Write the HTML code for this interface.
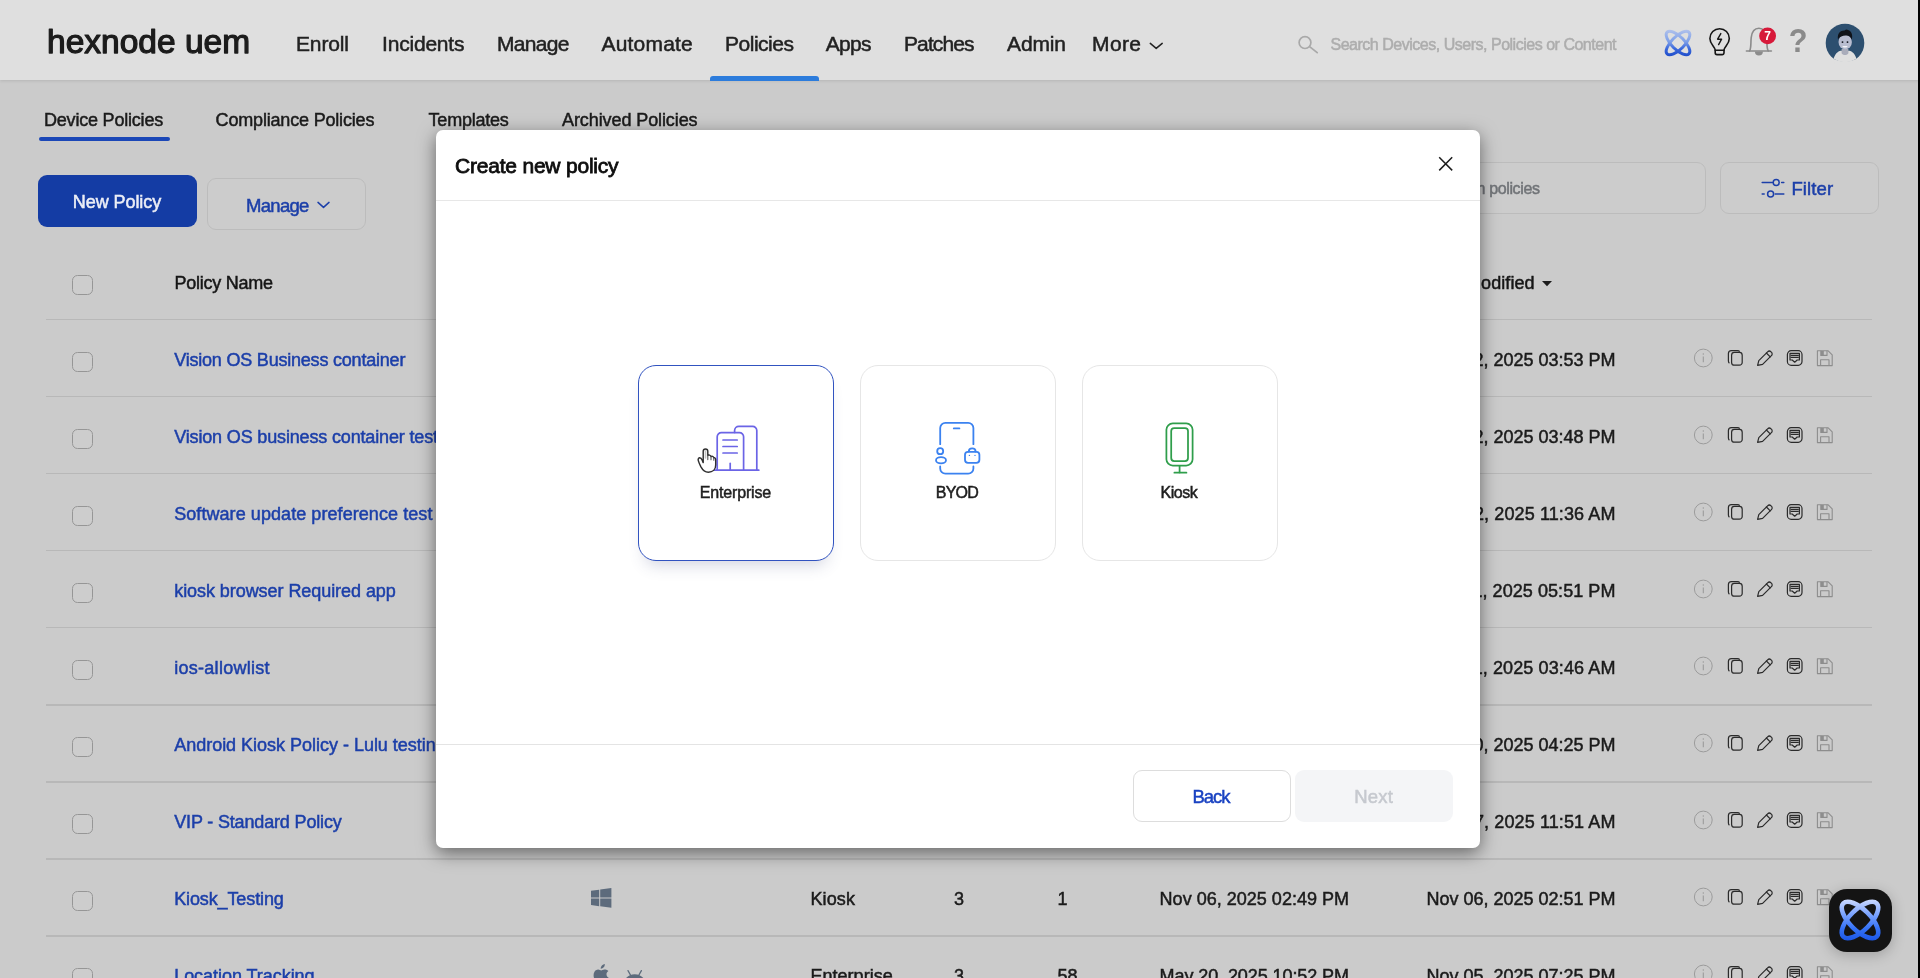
<!DOCTYPE html>
<html lang="en"><head><meta charset="utf-8"><title>Hexnode UEM - Policies</title>
<style>

*{box-sizing:border-box;margin:0;padding:0}
html,body{width:1920px;height:978px;overflow:hidden}
body{background:#cbcbcb;font-family:"Liberation Sans",sans-serif;position:relative;color:#1b1b1b}
#app{position:absolute;left:0;top:0;width:1920px;height:978px;overflow:hidden;will-change:transform}
.t{position:absolute;white-space:nowrap;line-height:1;display:block;-webkit-text-stroke:0.5px currentColor}
.abs{position:absolute}
svg{position:absolute;overflow:visible}
#hdr{position:absolute;left:0;top:0;width:1920px;height:80px;background:#dfdfdf;box-shadow:0 1px 3px rgba(0,0,0,.11)}
.line{position:absolute;left:46px;width:1826.4px;height:1.4px;background:#b8b8b8}
.cb{position:absolute;left:72px;width:21px;height:20px;border:1px solid #969696;border-radius:5.5px;background:#cdcdcd}
#modal{position:absolute;left:436px;top:130px;width:1044px;height:718px;background:#fff;border-radius:7px;box-shadow:0 5px 18px rgba(0,0,0,.5)}
.card{position:absolute;top:365px;width:196px;height:196px;border-radius:18px;background:#fff;border:1px solid #e6e6e6}
.btn{position:absolute;border-radius:9px}

</style></head>
<body>
<div id="app">
<header>
<div id="hdr">
<svg style="left:40px;top:14px" width="220" height="52" viewBox="40 14 220 52"><text x="47.0" y="52.6" font-family="Liberation Sans, sans-serif" font-size="33" textLength="203.2" lengthAdjust="spacingAndGlyphs" fill="#1c1c1c" stroke="#1c1c1c" stroke-width="1.25" stroke-linejoin="round" stroke-linecap="round">hexnode uem</text></svg>
<span class="t" style="left:296.00px;top:33px;font-size:21px;color:#222222;letter-spacing:-0.138px;">Enroll</span>
<span class="t" style="left:382.00px;top:33px;font-size:21px;color:#222222;letter-spacing:-0.194px;">Incidents</span>
<span class="t" style="left:497.00px;top:33px;font-size:21px;color:#222222;letter-spacing:-0.678px;">Manage</span>
<span class="t" style="left:601.50px;top:33px;font-size:21px;color:#222222;letter-spacing:0.188px;">Automate</span>
<span class="t" style="left:725.00px;top:33px;font-size:21px;color:#222222;letter-spacing:-0.480px;">Policies</span>
<span class="t" style="left:825.70px;top:33px;font-size:21px;color:#222222;letter-spacing:-0.689px;">Apps</span>
<span class="t" style="left:904.00px;top:33px;font-size:21px;color:#222222;letter-spacing:-0.897px;">Patches</span>
<span class="t" style="left:1007.00px;top:33px;font-size:21px;color:#222222;letter-spacing:-0.131px;">Admin</span>
<span class="t" style="left:1092.00px;top:33px;font-size:21px;color:#222222;letter-spacing:0.385px;">More</span>
<svg style="left:1148px;top:40px" width="18" height="12" viewBox="1148 40 18 12"><path d="M1150.3 43.4 L1156.2 48.4 L1162.2 43.4" fill="none" stroke="#222" stroke-width="1.5" stroke-linecap="round" stroke-linejoin="round"/></svg>
<div class="abs" style="left:710px;top:75.5px;width:109px;height:5px;border-radius:3px 3px 0 0;background:#2c7cdc"></div>
<svg style="left:1296px;top:33px" width="24" height="24" viewBox="1296 33 24 24"><circle cx="1305" cy="42.6" r="5.9" fill="none" stroke="#a9a9a9" stroke-width="1.7"/><path d="M1309.6 46.6 L1317.2 52.6" stroke="#a9a9a9" stroke-width="1.8" stroke-linecap="round"/></svg>
<span class="t" style="left:1330.50px;top:37px;font-size:16px;color:#adadad;letter-spacing:-0.485px;">Search Devices, Users, Policies or Content</span>
<svg style="left:1660.1px;top:24.9px" width="36" height="36" viewBox="-18 -18 36 36">
<defs><linearGradient id="ga" gradientUnits="userSpaceOnUse" x1="0" y1="-14" x2="0" y2="14"><stop offset="0" stop-color="#b4c4ec"/><stop offset="0.45" stop-color="#7d9fe8"/><stop offset="0.7" stop-color="#3a68dc"/><stop offset="1" stop-color="#1d4bc8"/></linearGradient></defs>
<g fill="none" stroke-width="3" stroke="url(#ga)">
<path d="M10.89 10.89 A15.4 6.4 45 1 0 -10.89 -10.89 A15.4 6.4 45 1 0 10.89 10.89 Z"/>
<path d="M10.89 -10.89 A15.4 6.4 -45 1 0 -10.89 10.89 A15.4 6.4 -45 1 0 10.89 -10.89 Z"/>
</g></svg>
<svg style="left:1705px;top:25px" width="30" height="34" viewBox="1705 25 30 34"><g fill="none" stroke="#151515" stroke-width="1.6" stroke-linecap="round" stroke-linejoin="round">
<path d="M1715.2 50.2 C1715.2 46.6 1709.9 44.6 1709.9 38.4 a9.7 9.7 0 0 1 19.4 0 C1729.3 44.6 1724 46.6 1724 50.2 Z"/>
<path d="M1715.2 50.2 v2.6 a1.8 1.8 0 0 0 1.8 1.8 h5.2 a1.8 1.8 0 0 0 1.8 -1.8 v-2.6"/>
<path d="M1720.8 33.6 L1717.6 39.2 H1721.6 L1718.6 44.6" stroke-width="1.4"/>
</g></svg>
<svg style="left:1742px;top:24px" width="34" height="36" viewBox="1742 24 34 36"><g fill="none" stroke="#8b8b8b" stroke-width="1.6" stroke-linecap="round" stroke-linejoin="round">
<path d="M1746.4 51 H1771.4"/>
<path d="M1749.6 51 C1751.4 47.5 1750.6 43 1751.2 37.6 C1751.9 31.6 1755 28.3 1758.9 28.3 C1762.8 28.3 1765.9 31.6 1766.6 37.6 C1767.2 43 1766.4 47.5 1768.2 51"/>
</g><path d="M1754.9 51.6 a4 4 0 0 0 8 0 Z" fill="#8b8b8b"/>
<circle cx="1767.6" cy="35.9" r="8.4" fill="#d7193a"/></svg>
<span class="t" style="left:1764.30px;top:30px;font-size:12px;color:#ffffff;font-weight:700;-webkit-text-stroke:0;">7</span>
<span class="t" style="left:1787.90px;top:24px;font-size:33px;color:#8a8a8a;font-weight:700;-webkit-text-stroke:0;transform:scaleX(.93);transform-origin:50% 50%;">?</span>
<svg style="left:1825px;top:23px" width="40" height="40" viewBox="-20 -20 40 40">
<defs><clipPath id="av"><circle cx="0" cy="0" r="19.3"/></clipPath></defs>
<circle cx="0" cy="0" r="19.3" fill="#2d4f6f"/>
<g clip-path="url(#av)">
<path d="M-12.2 20 C-11.6 13 -8.6 8.9 -4.6 7.7 L4.6 7.7 C8.6 8.9 11.6 13 12.2 20 Z" fill="#dfdfdf"/>
<path d="M-3.4 6 H3.4 V10.2 C2.4 12.6 -2.4 12.6 -3.4 10.2 Z" fill="#a9acba"/>
<ellipse cx="0.2" cy="-1" rx="6.7" ry="7.3" fill="#b9bdd0"/>
<path d="M-7 -3.6 C-8 -9.5 -4.6 -12.6 -0.4 -12.4 C0.6 -13.8 2.4 -14 3 -13 C6.6 -12 8 -8 6.8 -3.2 C5.6 -6.2 3.6 -7.6 0.6 -7.4 C-2.6 -7.2 -5.4 -6.4 -7 -3.6 Z" fill="#10131a"/>
<circle cx="-2.5" cy="-0.9" r="0.95" fill="#10131a"/><circle cx="2.5" cy="-0.9" r="0.95" fill="#10131a"/>
<path d="M-2.6 2.9 H2.6 C2.2 5 -2.2 5 -2.6 2.9 Z" fill="#f2f3f7"/>
</g><path d="M-10.3 16.4 C-6 18.9 6 18.9 10.3 16.4 V21 H-10.3 Z" fill="#dfdfdf"/></svg>
</div>
</header>
<main>
<span class="t" style="left:44.00px;top:111px;font-size:18px;color:#1b1b1b;letter-spacing:-0.203px;">Device Policies</span>
<span class="t" style="left:215.60px;top:111px;font-size:18px;color:#1b1b1b;letter-spacing:-0.182px;">Compliance Policies</span>
<span class="t" style="left:428.60px;top:111px;font-size:18px;color:#1b1b1b;letter-spacing:-0.230px;">Templates</span>
<span class="t" style="left:562.00px;top:111px;font-size:18px;color:#1b1b1b;letter-spacing:-0.091px;">Archived Policies</span>
<div class="abs" style="left:39px;top:137.4px;width:130.6px;height:3.4px;border-radius:2px;background:#1b47b7"></div>
<div class="btn" style="left:38px;top:175px;width:159px;height:52px;background:#143ca4"></div>
<span class="t" style="left:72.80px;top:193px;font-size:18px;color:#eceef6;letter-spacing:-0.069px;">New Policy</span>
<div class="btn" style="left:207px;top:178px;width:159px;height:52px;border:1px solid #bcbcbc;background:#cccccc"></div>
<span class="t" style="left:246.00px;top:197px;font-size:18.5px;color:#1c3fa9;letter-spacing:-0.691px;">Manage</span>
<svg style="left:315px;top:199px" width="18" height="12" viewBox="315 199 18 12"><path d="M318 202.4 L323.5 207.4 L329 202.4" fill="none" stroke="#1c3fa9" stroke-width="1.5" stroke-linecap="round" stroke-linejoin="round"/></svg>
<div class="btn" style="left:1338px;top:162px;width:368.4px;height:52px;border:1px solid #bcbcbc;background:#cccccc"></div>
<span class="t" style="left:1436.50px;top:181px;font-size:16px;color:#707377;letter-spacing:-0.357px;">Search policies</span>
<div class="btn" style="left:1720px;top:162px;width:159px;height:52px;border:1px solid #bcbcbc;background:#cccccc"></div>
<svg style="left:1760px;top:176px" width="28" height="24" viewBox="1760 176 28 24"><g fill="none" stroke="#1c3fa9" stroke-width="1.5" stroke-linecap="round">
<path d="M1762.2 182.4 H1772.4"/><circle cx="1776.2" cy="182.4" r="3"/><path d="M1781.6 182.4 H1783.8"/>
<path d="M1762.2 193.9 H1764.2"/><circle cx="1770.6" cy="193.9" r="3"/><path d="M1775.2 193.9 H1783.8"/>
</g></svg>
<span class="t" style="left:1791.40px;top:180px;font-size:18.5px;color:#1c3fa9;letter-spacing:0.138px;">Filter</span>
<div class="cb" style="top:274.6px"></div>
<span class="t" style="left:174.40px;top:274px;font-size:18px;color:#161616;letter-spacing:-0.243px;">Policy Name</span>
<span class="t" style="left:590.00px;top:274px;font-size:18px;color:#161616;">Platform</span>
<span class="t" style="left:811.00px;top:274px;font-size:18px;color:#161616;">Type</span>
<span class="t" style="left:925.00px;top:274px;font-size:18px;color:#161616;">Version</span>
<span class="t" style="left:1040.00px;top:274px;font-size:18px;color:#161616;">Targets</span>
<span class="t" style="left:1160.00px;top:274px;font-size:18px;color:#161616;">Created</span>
<span class="t" style="left:1426.60px;top:274px;font-size:18px;color:#161616;letter-spacing:0.078px;">Last Modified</span>
<svg style="left:1540px;top:278px" width="14" height="10" viewBox="1540 278 14 10"><path d="M1542 281 H1552 L1547 286.2 Z" fill="#1b1b1b"/></svg>
<div class="line" style="top:318.90px"></div>
<div class="cb" style="top:351.8px"></div>
<span class="t" style="left:174.20px;top:351px;font-size:18px;color:#1c3fa9;letter-spacing:-0.207px;">Vision OS Business container</span>
<svg style="left:592.5px;top:348.0px" width="17" height="20" viewBox="0 0 17 20"><g fill="#5d6b7c"><path d="M11.8 0 C11.9 1.3 11.4 2.5 10.7 3.3 C9.9 4.2 8.8 4.8 7.7 4.7 C7.6 3.5 8.2 2.3 8.9 1.5 C9.7 0.7 10.9 0.1 11.8 0 Z"/><path d="M15.4 6.9 C14.2 7.7 13.5 8.8 13.5 10.3 C13.5 12 14.5 13.3 15.9 13.9 C15.5 15.1 14.9 16.2 14.2 17.2 C13.4 18.3 12.6 19.4 11.4 19.4 C10.2 19.4 9.8 18.7 8.4 18.7 C7 18.7 6.5 19.4 5.4 19.4 C4.2 19.5 3.3 18.3 2.5 17.2 C0.9 14.9 -0.3 10.7 1.4 7.9 C2.2 6.5 3.6 5.6 5.2 5.6 C6.4 5.6 7.5 6.4 8.2 6.4 C8.9 6.4 10.3 5.4 11.8 5.6 C12.4 5.6 14.2 5.8 15.4 6.9 Z"/></g></svg>
<span class="t" style="left:810.40px;top:351px;font-size:18px;color:#1b1b1b;letter-spacing:0.040px;">Enterprise</span>
<span class="t" style="left:954.00px;top:351px;font-size:18px;color:#1b1b1b;">1</span>
<span class="t" style="left:1057.40px;top:351px;font-size:18px;color:#1b1b1b;">0</span>
<span class="t" style="left:1159.60px;top:351px;font-size:18px;color:#1b1b1b;letter-spacing:0.014px;">Nov 12, 2025 03:51 PM</span>
<span class="t" style="left:1426.40px;top:351px;font-size:18px;color:#1b1b1b;letter-spacing:-0.006px;">Nov 12, 2025 03:53 PM</span>
<svg style="left:1690px;top:345.6px" width="150" height="24" viewBox="1690 -12 150 24"><circle cx="1703.3" cy="0" r="8.9" fill="none" stroke="#9b9b9b" stroke-width="1"/><path d="M1703.3 -1.6 V4.2" stroke="#9b9b9b" stroke-width="1.1"/><circle cx="1703.3" cy="-3.9" r="0.75" fill="#9b9b9b"/><g fill="none" stroke="#2b2b2b" stroke-width="1.2" stroke-linejoin="round"><rect x="1731.6" y="-5.6" width="10.6" height="12.8" rx="2.8"/><path d="M1729.4 5.2 C1728.6 4.6 1728.4 4 1728.4 3 V-4.4 C1728.4 -6.2 1729.6 -7.4 1731.4 -7.4 H1737.4 C1738.6 -7.4 1739.2 -7.1 1739.8 -6.4"/></g><g fill="none" stroke="#2b2b2b" stroke-width="1.2" stroke-linejoin="round" stroke-linecap="round"><path d="M1757.6 7.4 L1758.8 2.6 L1767.6 -6.2 C1768.6 -7.2 1770 -7.2 1771 -6.2 L1771.4 -5.8 C1772.4 -4.8 1772.4 -3.4 1771.4 -2.4 L1762.6 6.4 Z"/><path d="M1766.4 -5 L1770.2 -1.2"/></g><g fill="none" stroke="#2b2b2b" stroke-width="1.2" stroke-linejoin="round"><rect x="1787.4" y="-7.3" width="14.6" height="14.6" rx="3.8"/><path d="M1790 -4.6 H1799.4 V2 L1797.2 2 L1794.7 4.2 L1792.2 2 L1790 2 Z"/><path d="M1790.6 -2.6 H1798.8 M1790.6 -0.6 H1798.8" stroke-width="1.3"/></g><g fill="none" stroke="#8d8d8d" stroke-width="1.1" stroke-linejoin="round"><path d="M1817.4 -7.2 H1828.2 L1832.2 -3.2 V7.6 H1817.4 Z"/><path d="M1820.6 7.6 V1.8 H1829 V7.6"/><path d="M1820.8 -7.2 V-2.6 H1827 V-7.2"/></g><rect x="1821" y="-7" width="2.8" height="4.2" fill="#8d8d8d"/></svg>
<div class="line" style="top:395.95px"></div>
<div class="cb" style="top:428.9px"></div>
<span class="t" style="left:174.20px;top:428px;font-size:18px;color:#1c3fa9;letter-spacing:-0.157px;">Vision OS business container test</span>
<svg style="left:592.5px;top:425.1px" width="17" height="20" viewBox="0 0 17 20"><g fill="#5d6b7c"><path d="M11.8 0 C11.9 1.3 11.4 2.5 10.7 3.3 C9.9 4.2 8.8 4.8 7.7 4.7 C7.6 3.5 8.2 2.3 8.9 1.5 C9.7 0.7 10.9 0.1 11.8 0 Z"/><path d="M15.4 6.9 C14.2 7.7 13.5 8.8 13.5 10.3 C13.5 12 14.5 13.3 15.9 13.9 C15.5 15.1 14.9 16.2 14.2 17.2 C13.4 18.3 12.6 19.4 11.4 19.4 C10.2 19.4 9.8 18.7 8.4 18.7 C7 18.7 6.5 19.4 5.4 19.4 C4.2 19.5 3.3 18.3 2.5 17.2 C0.9 14.9 -0.3 10.7 1.4 7.9 C2.2 6.5 3.6 5.6 5.2 5.6 C6.4 5.6 7.5 6.4 8.2 6.4 C8.9 6.4 10.3 5.4 11.8 5.6 C12.4 5.6 14.2 5.8 15.4 6.9 Z"/></g></svg>
<span class="t" style="left:810.40px;top:428px;font-size:18px;color:#1b1b1b;letter-spacing:0.040px;">Enterprise</span>
<span class="t" style="left:954.00px;top:428px;font-size:18px;color:#1b1b1b;">1</span>
<span class="t" style="left:1057.40px;top:428px;font-size:18px;color:#1b1b1b;">0</span>
<span class="t" style="left:1159.60px;top:428px;font-size:18px;color:#1b1b1b;letter-spacing:0.014px;">Nov 12, 2025 03:40 PM</span>
<span class="t" style="left:1426.40px;top:428px;font-size:18px;color:#1b1b1b;letter-spacing:-0.006px;">Nov 12, 2025 03:48 PM</span>
<svg style="left:1690px;top:422.7px" width="150" height="24" viewBox="1690 -12 150 24"><circle cx="1703.3" cy="0" r="8.9" fill="none" stroke="#9b9b9b" stroke-width="1"/><path d="M1703.3 -1.6 V4.2" stroke="#9b9b9b" stroke-width="1.1"/><circle cx="1703.3" cy="-3.9" r="0.75" fill="#9b9b9b"/><g fill="none" stroke="#2b2b2b" stroke-width="1.2" stroke-linejoin="round"><rect x="1731.6" y="-5.6" width="10.6" height="12.8" rx="2.8"/><path d="M1729.4 5.2 C1728.6 4.6 1728.4 4 1728.4 3 V-4.4 C1728.4 -6.2 1729.6 -7.4 1731.4 -7.4 H1737.4 C1738.6 -7.4 1739.2 -7.1 1739.8 -6.4"/></g><g fill="none" stroke="#2b2b2b" stroke-width="1.2" stroke-linejoin="round" stroke-linecap="round"><path d="M1757.6 7.4 L1758.8 2.6 L1767.6 -6.2 C1768.6 -7.2 1770 -7.2 1771 -6.2 L1771.4 -5.8 C1772.4 -4.8 1772.4 -3.4 1771.4 -2.4 L1762.6 6.4 Z"/><path d="M1766.4 -5 L1770.2 -1.2"/></g><g fill="none" stroke="#2b2b2b" stroke-width="1.2" stroke-linejoin="round"><rect x="1787.4" y="-7.3" width="14.6" height="14.6" rx="3.8"/><path d="M1790 -4.6 H1799.4 V2 L1797.2 2 L1794.7 4.2 L1792.2 2 L1790 2 Z"/><path d="M1790.6 -2.6 H1798.8 M1790.6 -0.6 H1798.8" stroke-width="1.3"/></g><g fill="none" stroke="#8d8d8d" stroke-width="1.1" stroke-linejoin="round"><path d="M1817.4 -7.2 H1828.2 L1832.2 -3.2 V7.6 H1817.4 Z"/><path d="M1820.6 7.6 V1.8 H1829 V7.6"/><path d="M1820.8 -7.2 V-2.6 H1827 V-7.2"/></g><rect x="1821" y="-7" width="2.8" height="4.2" fill="#8d8d8d"/></svg>
<div class="line" style="top:473.00px"></div>
<div class="cb" style="top:505.9px"></div>
<span class="t" style="left:174.20px;top:505px;font-size:18px;color:#1c3fa9;letter-spacing:0.068px;">Software update preference test</span>
<svg style="left:592.5px;top:502.1px" width="17" height="20" viewBox="0 0 17 20"><g fill="#5d6b7c"><path d="M11.8 0 C11.9 1.3 11.4 2.5 10.7 3.3 C9.9 4.2 8.8 4.8 7.7 4.7 C7.6 3.5 8.2 2.3 8.9 1.5 C9.7 0.7 10.9 0.1 11.8 0 Z"/><path d="M15.4 6.9 C14.2 7.7 13.5 8.8 13.5 10.3 C13.5 12 14.5 13.3 15.9 13.9 C15.5 15.1 14.9 16.2 14.2 17.2 C13.4 18.3 12.6 19.4 11.4 19.4 C10.2 19.4 9.8 18.7 8.4 18.7 C7 18.7 6.5 19.4 5.4 19.4 C4.2 19.5 3.3 18.3 2.5 17.2 C0.9 14.9 -0.3 10.7 1.4 7.9 C2.2 6.5 3.6 5.6 5.2 5.6 C6.4 5.6 7.5 6.4 8.2 6.4 C8.9 6.4 10.3 5.4 11.8 5.6 C12.4 5.6 14.2 5.8 15.4 6.9 Z"/></g></svg>
<span class="t" style="left:810.40px;top:505px;font-size:18px;color:#1b1b1b;letter-spacing:0.040px;">Enterprise</span>
<span class="t" style="left:954.00px;top:505px;font-size:18px;color:#1b1b1b;">2</span>
<span class="t" style="left:1057.40px;top:505px;font-size:18px;color:#1b1b1b;">1</span>
<span class="t" style="left:1159.60px;top:505px;font-size:18px;color:#1b1b1b;letter-spacing:0.130px;">Nov 12, 2025 11:30 AM</span>
<span class="t" style="left:1426.40px;top:505px;font-size:18px;color:#1b1b1b;letter-spacing:0.110px;">Nov 12, 2025 11:36 AM</span>
<svg style="left:1690px;top:499.7px" width="150" height="24" viewBox="1690 -12 150 24"><circle cx="1703.3" cy="0" r="8.9" fill="none" stroke="#9b9b9b" stroke-width="1"/><path d="M1703.3 -1.6 V4.2" stroke="#9b9b9b" stroke-width="1.1"/><circle cx="1703.3" cy="-3.9" r="0.75" fill="#9b9b9b"/><g fill="none" stroke="#2b2b2b" stroke-width="1.2" stroke-linejoin="round"><rect x="1731.6" y="-5.6" width="10.6" height="12.8" rx="2.8"/><path d="M1729.4 5.2 C1728.6 4.6 1728.4 4 1728.4 3 V-4.4 C1728.4 -6.2 1729.6 -7.4 1731.4 -7.4 H1737.4 C1738.6 -7.4 1739.2 -7.1 1739.8 -6.4"/></g><g fill="none" stroke="#2b2b2b" stroke-width="1.2" stroke-linejoin="round" stroke-linecap="round"><path d="M1757.6 7.4 L1758.8 2.6 L1767.6 -6.2 C1768.6 -7.2 1770 -7.2 1771 -6.2 L1771.4 -5.8 C1772.4 -4.8 1772.4 -3.4 1771.4 -2.4 L1762.6 6.4 Z"/><path d="M1766.4 -5 L1770.2 -1.2"/></g><g fill="none" stroke="#2b2b2b" stroke-width="1.2" stroke-linejoin="round"><rect x="1787.4" y="-7.3" width="14.6" height="14.6" rx="3.8"/><path d="M1790 -4.6 H1799.4 V2 L1797.2 2 L1794.7 4.2 L1792.2 2 L1790 2 Z"/><path d="M1790.6 -2.6 H1798.8 M1790.6 -0.6 H1798.8" stroke-width="1.3"/></g><g fill="none" stroke="#8d8d8d" stroke-width="1.1" stroke-linejoin="round"><path d="M1817.4 -7.2 H1828.2 L1832.2 -3.2 V7.6 H1817.4 Z"/><path d="M1820.6 7.6 V1.8 H1829 V7.6"/><path d="M1820.8 -7.2 V-2.6 H1827 V-7.2"/></g><rect x="1821" y="-7" width="2.8" height="4.2" fill="#8d8d8d"/></svg>
<div class="line" style="top:550.05px"></div>
<div class="cb" style="top:582.9px"></div>
<span class="t" style="left:174.20px;top:582px;font-size:18px;color:#1c3fa9;letter-spacing:-0.060px;">kiosk browser Required app</span>
<svg style="left:592.5px;top:584.6px" width="24" height="15" viewBox="0 0 24 15"><path d="M0.4 14.6 C0.8 8.6 5.6 4.2 11.7 4.2 C17.8 4.2 22.6 8.6 23 14.6 Z" fill="#5d6b7c"/><path d="M7.6 5.2 L5 0.6 M15.8 5.2 L18.4 0.6" stroke="#5d6b7c" stroke-width="1.3" stroke-linecap="round"/><circle cx="6.6" cy="10.6" r="1.1" fill="#cbcbcb"/><circle cx="16.8" cy="10.6" r="1.1" fill="#cbcbcb"/></svg>
<span class="t" style="left:810.40px;top:582px;font-size:18px;color:#1b1b1b;letter-spacing:0.146px;">Kiosk</span>
<span class="t" style="left:954.00px;top:582px;font-size:18px;color:#1b1b1b;">4</span>
<span class="t" style="left:1057.40px;top:582px;font-size:18px;color:#1b1b1b;">2</span>
<span class="t" style="left:1159.60px;top:582px;font-size:18px;color:#1b1b1b;letter-spacing:0.081px;">Nov 11, 2025 05:20 PM</span>
<span class="t" style="left:1426.40px;top:582px;font-size:18px;color:#1b1b1b;letter-spacing:0.061px;">Nov 11, 2025 05:51 PM</span>
<svg style="left:1690px;top:576.8px" width="150" height="24" viewBox="1690 -12 150 24"><circle cx="1703.3" cy="0" r="8.9" fill="none" stroke="#9b9b9b" stroke-width="1"/><path d="M1703.3 -1.6 V4.2" stroke="#9b9b9b" stroke-width="1.1"/><circle cx="1703.3" cy="-3.9" r="0.75" fill="#9b9b9b"/><g fill="none" stroke="#2b2b2b" stroke-width="1.2" stroke-linejoin="round"><rect x="1731.6" y="-5.6" width="10.6" height="12.8" rx="2.8"/><path d="M1729.4 5.2 C1728.6 4.6 1728.4 4 1728.4 3 V-4.4 C1728.4 -6.2 1729.6 -7.4 1731.4 -7.4 H1737.4 C1738.6 -7.4 1739.2 -7.1 1739.8 -6.4"/></g><g fill="none" stroke="#2b2b2b" stroke-width="1.2" stroke-linejoin="round" stroke-linecap="round"><path d="M1757.6 7.4 L1758.8 2.6 L1767.6 -6.2 C1768.6 -7.2 1770 -7.2 1771 -6.2 L1771.4 -5.8 C1772.4 -4.8 1772.4 -3.4 1771.4 -2.4 L1762.6 6.4 Z"/><path d="M1766.4 -5 L1770.2 -1.2"/></g><g fill="none" stroke="#2b2b2b" stroke-width="1.2" stroke-linejoin="round"><rect x="1787.4" y="-7.3" width="14.6" height="14.6" rx="3.8"/><path d="M1790 -4.6 H1799.4 V2 L1797.2 2 L1794.7 4.2 L1792.2 2 L1790 2 Z"/><path d="M1790.6 -2.6 H1798.8 M1790.6 -0.6 H1798.8" stroke-width="1.3"/></g><g fill="none" stroke="#8d8d8d" stroke-width="1.1" stroke-linejoin="round"><path d="M1817.4 -7.2 H1828.2 L1832.2 -3.2 V7.6 H1817.4 Z"/><path d="M1820.6 7.6 V1.8 H1829 V7.6"/><path d="M1820.8 -7.2 V-2.6 H1827 V-7.2"/></g><rect x="1821" y="-7" width="2.8" height="4.2" fill="#8d8d8d"/></svg>
<div class="line" style="top:627.10px"></div>
<div class="cb" style="top:660.0px"></div>
<span class="t" style="left:174.20px;top:659px;font-size:18px;color:#1c3fa9;letter-spacing:0.281px;">ios-allowlist</span>
<svg style="left:592.5px;top:656.2px" width="17" height="20" viewBox="0 0 17 20"><g fill="#5d6b7c"><path d="M11.8 0 C11.9 1.3 11.4 2.5 10.7 3.3 C9.9 4.2 8.8 4.8 7.7 4.7 C7.6 3.5 8.2 2.3 8.9 1.5 C9.7 0.7 10.9 0.1 11.8 0 Z"/><path d="M15.4 6.9 C14.2 7.7 13.5 8.8 13.5 10.3 C13.5 12 14.5 13.3 15.9 13.9 C15.5 15.1 14.9 16.2 14.2 17.2 C13.4 18.3 12.6 19.4 11.4 19.4 C10.2 19.4 9.8 18.7 8.4 18.7 C7 18.7 6.5 19.4 5.4 19.4 C4.2 19.5 3.3 18.3 2.5 17.2 C0.9 14.9 -0.3 10.7 1.4 7.9 C2.2 6.5 3.6 5.6 5.2 5.6 C6.4 5.6 7.5 6.4 8.2 6.4 C8.9 6.4 10.3 5.4 11.8 5.6 C12.4 5.6 14.2 5.8 15.4 6.9 Z"/></g></svg>
<span class="t" style="left:810.40px;top:659px;font-size:18px;color:#1b1b1b;letter-spacing:0.040px;">Enterprise</span>
<span class="t" style="left:954.00px;top:659px;font-size:18px;color:#1b1b1b;">2</span>
<span class="t" style="left:1057.40px;top:659px;font-size:18px;color:#1b1b1b;">3</span>
<span class="t" style="left:1159.60px;top:659px;font-size:18px;color:#1b1b1b;letter-spacing:0.130px;">Nov 11, 2025 03:40 AM</span>
<span class="t" style="left:1426.40px;top:659px;font-size:18px;color:#1b1b1b;letter-spacing:0.110px;">Nov 11, 2025 03:46 AM</span>
<svg style="left:1690px;top:653.8px" width="150" height="24" viewBox="1690 -12 150 24"><circle cx="1703.3" cy="0" r="8.9" fill="none" stroke="#9b9b9b" stroke-width="1"/><path d="M1703.3 -1.6 V4.2" stroke="#9b9b9b" stroke-width="1.1"/><circle cx="1703.3" cy="-3.9" r="0.75" fill="#9b9b9b"/><g fill="none" stroke="#2b2b2b" stroke-width="1.2" stroke-linejoin="round"><rect x="1731.6" y="-5.6" width="10.6" height="12.8" rx="2.8"/><path d="M1729.4 5.2 C1728.6 4.6 1728.4 4 1728.4 3 V-4.4 C1728.4 -6.2 1729.6 -7.4 1731.4 -7.4 H1737.4 C1738.6 -7.4 1739.2 -7.1 1739.8 -6.4"/></g><g fill="none" stroke="#2b2b2b" stroke-width="1.2" stroke-linejoin="round" stroke-linecap="round"><path d="M1757.6 7.4 L1758.8 2.6 L1767.6 -6.2 C1768.6 -7.2 1770 -7.2 1771 -6.2 L1771.4 -5.8 C1772.4 -4.8 1772.4 -3.4 1771.4 -2.4 L1762.6 6.4 Z"/><path d="M1766.4 -5 L1770.2 -1.2"/></g><g fill="none" stroke="#2b2b2b" stroke-width="1.2" stroke-linejoin="round"><rect x="1787.4" y="-7.3" width="14.6" height="14.6" rx="3.8"/><path d="M1790 -4.6 H1799.4 V2 L1797.2 2 L1794.7 4.2 L1792.2 2 L1790 2 Z"/><path d="M1790.6 -2.6 H1798.8 M1790.6 -0.6 H1798.8" stroke-width="1.3"/></g><g fill="none" stroke="#8d8d8d" stroke-width="1.1" stroke-linejoin="round"><path d="M1817.4 -7.2 H1828.2 L1832.2 -3.2 V7.6 H1817.4 Z"/><path d="M1820.6 7.6 V1.8 H1829 V7.6"/><path d="M1820.8 -7.2 V-2.6 H1827 V-7.2"/></g><rect x="1821" y="-7" width="2.8" height="4.2" fill="#8d8d8d"/></svg>
<div class="line" style="top:704.15px"></div>
<div class="cb" style="top:737.0px"></div>
<span class="t" style="left:174.20px;top:736px;font-size:18px;color:#1c3fa9;letter-spacing:-0.016px;">Android Kiosk Policy - Lulu testing</span>
<svg style="left:592.5px;top:738.8px" width="24" height="15" viewBox="0 0 24 15"><path d="M0.4 14.6 C0.8 8.6 5.6 4.2 11.7 4.2 C17.8 4.2 22.6 8.6 23 14.6 Z" fill="#5d6b7c"/><path d="M7.6 5.2 L5 0.6 M15.8 5.2 L18.4 0.6" stroke="#5d6b7c" stroke-width="1.3" stroke-linecap="round"/><circle cx="6.6" cy="10.6" r="1.1" fill="#cbcbcb"/><circle cx="16.8" cy="10.6" r="1.1" fill="#cbcbcb"/></svg>
<span class="t" style="left:810.40px;top:736px;font-size:18px;color:#1b1b1b;letter-spacing:0.146px;">Kiosk</span>
<span class="t" style="left:954.00px;top:736px;font-size:18px;color:#1b1b1b;">5</span>
<span class="t" style="left:1057.40px;top:736px;font-size:18px;color:#1b1b1b;">1</span>
<span class="t" style="left:1159.60px;top:736px;font-size:18px;color:#1b1b1b;letter-spacing:0.014px;">Nov 10, 2025 02:25 PM</span>
<span class="t" style="left:1426.40px;top:736px;font-size:18px;color:#1b1b1b;letter-spacing:-0.006px;">Nov 10, 2025 04:25 PM</span>
<svg style="left:1690px;top:730.9px" width="150" height="24" viewBox="1690 -12 150 24"><circle cx="1703.3" cy="0" r="8.9" fill="none" stroke="#9b9b9b" stroke-width="1"/><path d="M1703.3 -1.6 V4.2" stroke="#9b9b9b" stroke-width="1.1"/><circle cx="1703.3" cy="-3.9" r="0.75" fill="#9b9b9b"/><g fill="none" stroke="#2b2b2b" stroke-width="1.2" stroke-linejoin="round"><rect x="1731.6" y="-5.6" width="10.6" height="12.8" rx="2.8"/><path d="M1729.4 5.2 C1728.6 4.6 1728.4 4 1728.4 3 V-4.4 C1728.4 -6.2 1729.6 -7.4 1731.4 -7.4 H1737.4 C1738.6 -7.4 1739.2 -7.1 1739.8 -6.4"/></g><g fill="none" stroke="#2b2b2b" stroke-width="1.2" stroke-linejoin="round" stroke-linecap="round"><path d="M1757.6 7.4 L1758.8 2.6 L1767.6 -6.2 C1768.6 -7.2 1770 -7.2 1771 -6.2 L1771.4 -5.8 C1772.4 -4.8 1772.4 -3.4 1771.4 -2.4 L1762.6 6.4 Z"/><path d="M1766.4 -5 L1770.2 -1.2"/></g><g fill="none" stroke="#2b2b2b" stroke-width="1.2" stroke-linejoin="round"><rect x="1787.4" y="-7.3" width="14.6" height="14.6" rx="3.8"/><path d="M1790 -4.6 H1799.4 V2 L1797.2 2 L1794.7 4.2 L1792.2 2 L1790 2 Z"/><path d="M1790.6 -2.6 H1798.8 M1790.6 -0.6 H1798.8" stroke-width="1.3"/></g><g fill="none" stroke="#8d8d8d" stroke-width="1.1" stroke-linejoin="round"><path d="M1817.4 -7.2 H1828.2 L1832.2 -3.2 V7.6 H1817.4 Z"/><path d="M1820.6 7.6 V1.8 H1829 V7.6"/><path d="M1820.8 -7.2 V-2.6 H1827 V-7.2"/></g><rect x="1821" y="-7" width="2.8" height="4.2" fill="#8d8d8d"/></svg>
<div class="line" style="top:781.20px"></div>
<div class="cb" style="top:814.1px"></div>
<span class="t" style="left:174.20px;top:813px;font-size:18px;color:#1c3fa9;letter-spacing:-0.158px;">VIP - Standard Policy</span>
<svg style="left:592.5px;top:810.3px" width="17" height="20" viewBox="0 0 17 20"><g fill="#5d6b7c"><path d="M11.8 0 C11.9 1.3 11.4 2.5 10.7 3.3 C9.9 4.2 8.8 4.8 7.7 4.7 C7.6 3.5 8.2 2.3 8.9 1.5 C9.7 0.7 10.9 0.1 11.8 0 Z"/><path d="M15.4 6.9 C14.2 7.7 13.5 8.8 13.5 10.3 C13.5 12 14.5 13.3 15.9 13.9 C15.5 15.1 14.9 16.2 14.2 17.2 C13.4 18.3 12.6 19.4 11.4 19.4 C10.2 19.4 9.8 18.7 8.4 18.7 C7 18.7 6.5 19.4 5.4 19.4 C4.2 19.5 3.3 18.3 2.5 17.2 C0.9 14.9 -0.3 10.7 1.4 7.9 C2.2 6.5 3.6 5.6 5.2 5.6 C6.4 5.6 7.5 6.4 8.2 6.4 C8.9 6.4 10.3 5.4 11.8 5.6 C12.4 5.6 14.2 5.8 15.4 6.9 Z"/></g></svg>
<svg style="left:623.4px;top:815.8px" width="24" height="15" viewBox="0 0 24 15"><path d="M0.4 14.6 C0.8 8.6 5.6 4.2 11.7 4.2 C17.8 4.2 22.6 8.6 23 14.6 Z" fill="#5d6b7c"/><path d="M7.6 5.2 L5 0.6 M15.8 5.2 L18.4 0.6" stroke="#5d6b7c" stroke-width="1.3" stroke-linecap="round"/><circle cx="6.6" cy="10.6" r="1.1" fill="#cbcbcb"/><circle cx="16.8" cy="10.6" r="1.1" fill="#cbcbcb"/></svg>
<span class="t" style="left:810.40px;top:813px;font-size:18px;color:#1b1b1b;letter-spacing:0.040px;">Enterprise</span>
<span class="t" style="left:954.00px;top:813px;font-size:18px;color:#1b1b1b;">3</span>
<span class="t" style="left:1057.40px;top:813px;font-size:18px;color:#1b1b1b;">12</span>
<span class="t" style="left:1159.60px;top:813px;font-size:18px;color:#1b1b1b;letter-spacing:0.130px;">Nov 07, 2025 10:11 AM</span>
<span class="t" style="left:1426.40px;top:813px;font-size:18px;color:#1b1b1b;letter-spacing:0.110px;">Nov 07, 2025 11:51 AM</span>
<svg style="left:1690px;top:807.9px" width="150" height="24" viewBox="1690 -12 150 24"><circle cx="1703.3" cy="0" r="8.9" fill="none" stroke="#9b9b9b" stroke-width="1"/><path d="M1703.3 -1.6 V4.2" stroke="#9b9b9b" stroke-width="1.1"/><circle cx="1703.3" cy="-3.9" r="0.75" fill="#9b9b9b"/><g fill="none" stroke="#2b2b2b" stroke-width="1.2" stroke-linejoin="round"><rect x="1731.6" y="-5.6" width="10.6" height="12.8" rx="2.8"/><path d="M1729.4 5.2 C1728.6 4.6 1728.4 4 1728.4 3 V-4.4 C1728.4 -6.2 1729.6 -7.4 1731.4 -7.4 H1737.4 C1738.6 -7.4 1739.2 -7.1 1739.8 -6.4"/></g><g fill="none" stroke="#2b2b2b" stroke-width="1.2" stroke-linejoin="round" stroke-linecap="round"><path d="M1757.6 7.4 L1758.8 2.6 L1767.6 -6.2 C1768.6 -7.2 1770 -7.2 1771 -6.2 L1771.4 -5.8 C1772.4 -4.8 1772.4 -3.4 1771.4 -2.4 L1762.6 6.4 Z"/><path d="M1766.4 -5 L1770.2 -1.2"/></g><g fill="none" stroke="#2b2b2b" stroke-width="1.2" stroke-linejoin="round"><rect x="1787.4" y="-7.3" width="14.6" height="14.6" rx="3.8"/><path d="M1790 -4.6 H1799.4 V2 L1797.2 2 L1794.7 4.2 L1792.2 2 L1790 2 Z"/><path d="M1790.6 -2.6 H1798.8 M1790.6 -0.6 H1798.8" stroke-width="1.3"/></g><g fill="none" stroke="#8d8d8d" stroke-width="1.1" stroke-linejoin="round"><path d="M1817.4 -7.2 H1828.2 L1832.2 -3.2 V7.6 H1817.4 Z"/><path d="M1820.6 7.6 V1.8 H1829 V7.6"/><path d="M1820.8 -7.2 V-2.6 H1827 V-7.2"/></g><rect x="1821" y="-7" width="2.8" height="4.2" fill="#8d8d8d"/></svg>
<div class="line" style="top:858.25px"></div>
<div class="cb" style="top:891.1px"></div>
<span class="t" style="left:174.20px;top:890px;font-size:18px;color:#1c3fa9;letter-spacing:-0.122px;">Kiosk_Testing</span>
<svg style="left:591px;top:888.0px" width="21" height="20" viewBox="0 0 21 20"><g fill="#5d6b7c"><path d="M0 2.8 L8.2 1.7 V9.5 H0 Z"/><path d="M9.2 1.55 L20.4 0 V9.5 H9.2 Z"/><path d="M0 10.4 H8.2 V18.2 L0 17.1 Z"/><path d="M9.2 10.4 H20.4 V19.8 L9.2 18.3 Z"/></g></svg>
<span class="t" style="left:810.40px;top:890px;font-size:18px;color:#1b1b1b;letter-spacing:0.146px;">Kiosk</span>
<span class="t" style="left:954.00px;top:890px;font-size:18px;color:#1b1b1b;">3</span>
<span class="t" style="left:1057.40px;top:890px;font-size:18px;color:#1b1b1b;">1</span>
<span class="t" style="left:1159.60px;top:890px;font-size:18px;color:#1b1b1b;letter-spacing:0.014px;">Nov 06, 2025 02:49 PM</span>
<span class="t" style="left:1426.40px;top:890px;font-size:18px;color:#1b1b1b;letter-spacing:-0.006px;">Nov 06, 2025 02:51 PM</span>
<svg style="left:1690px;top:885.0px" width="150" height="24" viewBox="1690 -12 150 24"><circle cx="1703.3" cy="0" r="8.9" fill="none" stroke="#9b9b9b" stroke-width="1"/><path d="M1703.3 -1.6 V4.2" stroke="#9b9b9b" stroke-width="1.1"/><circle cx="1703.3" cy="-3.9" r="0.75" fill="#9b9b9b"/><g fill="none" stroke="#2b2b2b" stroke-width="1.2" stroke-linejoin="round"><rect x="1731.6" y="-5.6" width="10.6" height="12.8" rx="2.8"/><path d="M1729.4 5.2 C1728.6 4.6 1728.4 4 1728.4 3 V-4.4 C1728.4 -6.2 1729.6 -7.4 1731.4 -7.4 H1737.4 C1738.6 -7.4 1739.2 -7.1 1739.8 -6.4"/></g><g fill="none" stroke="#2b2b2b" stroke-width="1.2" stroke-linejoin="round" stroke-linecap="round"><path d="M1757.6 7.4 L1758.8 2.6 L1767.6 -6.2 C1768.6 -7.2 1770 -7.2 1771 -6.2 L1771.4 -5.8 C1772.4 -4.8 1772.4 -3.4 1771.4 -2.4 L1762.6 6.4 Z"/><path d="M1766.4 -5 L1770.2 -1.2"/></g><g fill="none" stroke="#2b2b2b" stroke-width="1.2" stroke-linejoin="round"><rect x="1787.4" y="-7.3" width="14.6" height="14.6" rx="3.8"/><path d="M1790 -4.6 H1799.4 V2 L1797.2 2 L1794.7 4.2 L1792.2 2 L1790 2 Z"/><path d="M1790.6 -2.6 H1798.8 M1790.6 -0.6 H1798.8" stroke-width="1.3"/></g><g fill="none" stroke="#8d8d8d" stroke-width="1.1" stroke-linejoin="round"><path d="M1817.4 -7.2 H1828.2 L1832.2 -3.2 V7.6 H1817.4 Z"/><path d="M1820.6 7.6 V1.8 H1829 V7.6"/><path d="M1820.8 -7.2 V-2.6 H1827 V-7.2"/></g><rect x="1821" y="-7" width="2.8" height="4.2" fill="#8d8d8d"/></svg>
<div class="line" style="top:935.30px"></div>
<div class="cb" style="top:968.2px"></div>
<span class="t" style="left:174.20px;top:967px;font-size:18px;color:#1c3fa9;letter-spacing:-0.043px;">Location Tracking</span>
<svg style="left:592.5px;top:964.4px" width="17" height="20" viewBox="0 0 17 20"><g fill="#5d6b7c"><path d="M11.8 0 C11.9 1.3 11.4 2.5 10.7 3.3 C9.9 4.2 8.8 4.8 7.7 4.7 C7.6 3.5 8.2 2.3 8.9 1.5 C9.7 0.7 10.9 0.1 11.8 0 Z"/><path d="M15.4 6.9 C14.2 7.7 13.5 8.8 13.5 10.3 C13.5 12 14.5 13.3 15.9 13.9 C15.5 15.1 14.9 16.2 14.2 17.2 C13.4 18.3 12.6 19.4 11.4 19.4 C10.2 19.4 9.8 18.7 8.4 18.7 C7 18.7 6.5 19.4 5.4 19.4 C4.2 19.5 3.3 18.3 2.5 17.2 C0.9 14.9 -0.3 10.7 1.4 7.9 C2.2 6.5 3.6 5.6 5.2 5.6 C6.4 5.6 7.5 6.4 8.2 6.4 C8.9 6.4 10.3 5.4 11.8 5.6 C12.4 5.6 14.2 5.8 15.4 6.9 Z"/></g></svg>
<svg style="left:623.4px;top:969.9px" width="24" height="15" viewBox="0 0 24 15"><path d="M0.4 14.6 C0.8 8.6 5.6 4.2 11.7 4.2 C17.8 4.2 22.6 8.6 23 14.6 Z" fill="#5d6b7c"/><path d="M7.6 5.2 L5 0.6 M15.8 5.2 L18.4 0.6" stroke="#5d6b7c" stroke-width="1.3" stroke-linecap="round"/><circle cx="6.6" cy="10.6" r="1.1" fill="#cbcbcb"/><circle cx="16.8" cy="10.6" r="1.1" fill="#cbcbcb"/></svg>
<span class="t" style="left:810.40px;top:967px;font-size:18px;color:#1b1b1b;letter-spacing:0.040px;">Enterprise</span>
<span class="t" style="left:954.00px;top:967px;font-size:18px;color:#1b1b1b;">3</span>
<span class="t" style="left:1057.40px;top:967px;font-size:18px;color:#1b1b1b;">58</span>
<span class="t" style="left:1159.60px;top:967px;font-size:18px;color:#1b1b1b;letter-spacing:-0.086px;">May 20, 2025 10:52 PM</span>
<span class="t" style="left:1426.40px;top:967px;font-size:18px;color:#1b1b1b;letter-spacing:-0.006px;">Nov 05, 2025 07:25 PM</span>
<svg style="left:1690px;top:962.0px" width="150" height="24" viewBox="1690 -12 150 24"><circle cx="1703.3" cy="0" r="8.9" fill="none" stroke="#9b9b9b" stroke-width="1"/><path d="M1703.3 -1.6 V4.2" stroke="#9b9b9b" stroke-width="1.1"/><circle cx="1703.3" cy="-3.9" r="0.75" fill="#9b9b9b"/><g fill="none" stroke="#2b2b2b" stroke-width="1.2" stroke-linejoin="round"><rect x="1731.6" y="-5.6" width="10.6" height="12.8" rx="2.8"/><path d="M1729.4 5.2 C1728.6 4.6 1728.4 4 1728.4 3 V-4.4 C1728.4 -6.2 1729.6 -7.4 1731.4 -7.4 H1737.4 C1738.6 -7.4 1739.2 -7.1 1739.8 -6.4"/></g><g fill="none" stroke="#2b2b2b" stroke-width="1.2" stroke-linejoin="round" stroke-linecap="round"><path d="M1757.6 7.4 L1758.8 2.6 L1767.6 -6.2 C1768.6 -7.2 1770 -7.2 1771 -6.2 L1771.4 -5.8 C1772.4 -4.8 1772.4 -3.4 1771.4 -2.4 L1762.6 6.4 Z"/><path d="M1766.4 -5 L1770.2 -1.2"/></g><g fill="none" stroke="#2b2b2b" stroke-width="1.2" stroke-linejoin="round"><rect x="1787.4" y="-7.3" width="14.6" height="14.6" rx="3.8"/><path d="M1790 -4.6 H1799.4 V2 L1797.2 2 L1794.7 4.2 L1792.2 2 L1790 2 Z"/><path d="M1790.6 -2.6 H1798.8 M1790.6 -0.6 H1798.8" stroke-width="1.3"/></g><g fill="none" stroke="#8d8d8d" stroke-width="1.1" stroke-linejoin="round"><path d="M1817.4 -7.2 H1828.2 L1832.2 -3.2 V7.6 H1817.4 Z"/><path d="M1820.6 7.6 V1.8 H1829 V7.6"/><path d="M1820.8 -7.2 V-2.6 H1827 V-7.2"/></g><rect x="1821" y="-7" width="2.8" height="4.2" fill="#8d8d8d"/></svg>
<div class="abs" style="left:1829.4px;top:889px;width:62.6px;height:62.6px;border-radius:18px;background:#141414;box-shadow:0 3px 14px rgba(0,0,0,.22)"></div>
<svg style="left:1835.4px;top:895.3px" width="50" height="50" viewBox="-25 -25 50 50">
<defs><linearGradient id="gb" gradientUnits="userSpaceOnUse" x1="0" y1="-21" x2="0" y2="21"><stop offset="0" stop-color="#cfdcff"/><stop offset="0.35" stop-color="#7fa6ff"/><stop offset="0.7" stop-color="#3572f6"/><stop offset="1" stop-color="#1b56e6"/></linearGradient></defs>
<g fill="none" stroke-width="4.6" stroke="url(#gb)">
<path d="M16.69 16.69 A23.6 10.4 45 1 0 -16.69 -16.69 A23.6 10.4 45 1 0 16.69 16.69 Z"/>
<path d="M16.69 -16.69 A23.6 10.4 -45 1 0 -16.69 16.69 A23.6 10.4 -45 1 0 16.69 -16.69 Z"/>
</g></svg>
<div class="abs" style="left:1918.3px;top:0;width:1.7px;height:978px;background:#000;z-index:50"></div>
</main>
<section role="dialog" aria-label="Create new policy">
<div id="modal"></div>
<span class="t" style="left:455.00px;top:155px;font-size:21px;color:#0e0e0e;letter-spacing:-0.207px;-webkit-text-stroke:0.8px #0e0e0e;">Create new policy</span>
<svg style="left:1436px;top:154px" width="20" height="20" viewBox="1436 154 20 20"><path d="M1439.2 157.2 L1452.2 170.4 M1452.2 157.2 L1439.2 170.4" stroke="#1d1d1d" stroke-width="1.5" stroke-linecap="butt"/></svg>
<div class="abs" style="left:436px;top:200.4px;width:1044px;height:1px;background:#e7e7e7"></div>
<div class="abs" style="left:436px;top:743.7px;width:1044px;height:1px;background:#e4e4e4"></div>
<div class="card" style="left:638px;border:1.3px solid #3153c0;box-shadow:0 11px 16px -7px rgba(70,80,130,.24)"></div>
<div class="card" style="left:860px"></div>
<div class="card" style="left:1082px"></div>
<svg style="left:706px;top:418px" width="62" height="60" viewBox="706 418 62 60"><g fill="none" stroke="#6b64e6" stroke-width="1.7" stroke-linecap="round" stroke-linejoin="round">
<path d="M734.6 432.4 V430.6 a4.2 4.2 0 0 1 4.2 -4.2 H752.6 a4.2 4.2 0 0 1 4.2 4.2 V470.2"/>
<path d="M717.2 470.2 V436.8 a4.2 4.2 0 0 1 4.2 -4.2 H739.4 a4.2 4.2 0 0 1 4.2 4.2 V470.2"/>
<path d="M714.2 470.2 H758.8"/>
<path d="M723 440 H737.2 M723 446.5 H737.2 M723 453 H737.2"/>
<path d="M730.2 463.4 V470"/>
</g></svg>
<svg style="left:692px;top:444px" width="28" height="32" viewBox="692 444 28 32">
<path d="M703.2 462.6 V451.2 C703.2 449.6 704.2 448.9 705.5 448.9 C706.8 448.9 707.8 449.6 707.8 451.2 V455.4 C708.6 454.8 710.4 454.9 711 456.6 C711.8 455.9 713.4 456.2 713.8 457.8 C714.6 457.4 715.7 458 715.7 459.6 V465 C715.7 469.4 712.6 472.2 708.4 472.2 C704.6 472.2 702.6 470 700.8 466.6 C699.8 464.6 698.8 462.4 698.3 460.6 C697.8 458.8 698.6 457.8 699.8 457.8 C700.9 457.8 701.6 458.8 702.2 460.2 Z" fill="#ffffff" stroke="#2f2f2f" stroke-width="1.45" stroke-linejoin="round"/>
<path d="M705.5 451 V458" stroke="#c4c4c4" stroke-width="1.6" stroke-linecap="round"/>
<path d="M707.8 455.4 V459.6 M711 456.8 V459.8 M713.8 458 V460.2" stroke="#555" stroke-width="1.1" stroke-linecap="round"/>
</svg>
<span class="t" style="left:699.80px;top:485px;font-size:16px;color:#1e1e1e;letter-spacing:-0.169px;">Enterprise</span>
<svg style="left:930px;top:416px" width="56" height="64" viewBox="930 416 56 64"><g fill="none" stroke="#3b82f0" stroke-width="1.8" stroke-linecap="round" stroke-linejoin="round">
<path d="M940.2 444.2 V428 a5.2 5.2 0 0 1 5.2 -5.2 H968.2 a5.2 5.2 0 0 1 5.2 5.2 V444.2"/>
<path d="M940.2 466.4 V468.4 a5.2 5.2 0 0 0 5.2 5.2 H968.2 a5.2 5.2 0 0 0 5.2 -5.2 V466.4"/>
<path d="M953.8 428.4 H959.4"/>
<circle cx="940.2" cy="451.2" r="3"/>
<ellipse cx="941" cy="460.2" rx="5" ry="3.1"/>
<rect x="965" y="451.8" width="14.4" height="11" rx="3"/>
<path d="M968.8 451.6 C968.8 447.4 975.6 447.4 975.6 451.6"/>
</g><circle cx="969.4" cy="455.4" r="0.7" fill="#3b82f0"/><circle cx="975" cy="455.4" r="0.7" fill="#3b82f0"/></svg>
<span class="t" style="left:935.80px;top:485px;font-size:16px;color:#1e1e1e;letter-spacing:-0.781px;">BYOD</span>
<svg style="left:1160px;top:418px" width="40" height="60" viewBox="1160 418 40 60"><g fill="none" stroke="#2f9e4b" stroke-width="1.75" stroke-linecap="round" stroke-linejoin="round">
<rect x="1166.4" y="423.4" width="26.2" height="42.2" rx="6.4"/>
<rect x="1171.2" y="428" width="16.8" height="33" rx="3"/>
<path d="M1179.6 465.8 V472.4"/><path d="M1174.4 472.7 H1186.4" stroke-width="1.8"/>
</g></svg>
<span class="t" style="left:1160.60px;top:485px;font-size:16px;color:#1e1e1e;letter-spacing:-0.481px;">Kiosk</span>
<div class="btn" style="left:1133px;top:770px;width:158.4px;height:52px;border:1px solid #dddddd;background:#fff"></div>
<span class="t" style="left:1192.40px;top:788px;font-size:18.5px;color:#1a43c2;letter-spacing:-1.043px;">Back</span>
<div class="btn" style="left:1295.4px;top:770px;width:158px;height:52px;background:#f4f5f7"></div>
<span class="t" style="left:1354.20px;top:788px;font-size:18.5px;color:#c6c9cf;letter-spacing:0.187px;">Next</span>
</section>
</div>
</body></html>
